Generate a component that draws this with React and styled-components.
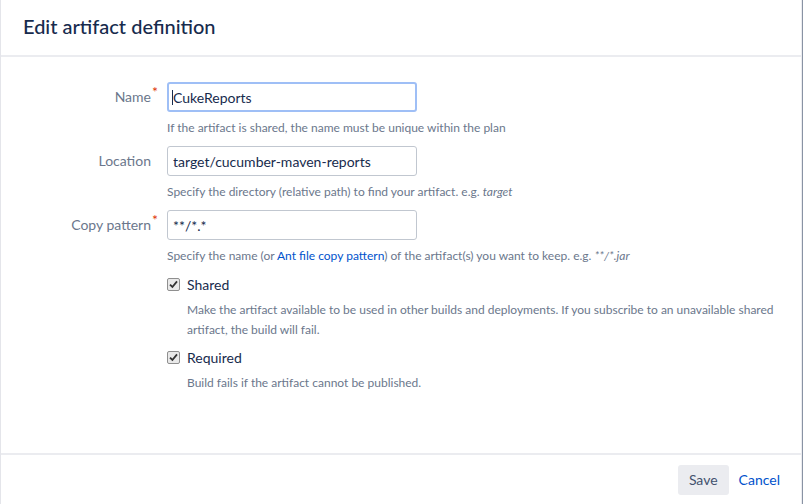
import React from "react";
import styled, { createGlobalStyle } from "styled-components";

const GlobalStyle = createGlobalStyle`
    html, body {
        margin: 0;
        padding: 0;
        background: #8993a4;
    }
    body {
        font-family: "Lato", "Liberation Sans", sans-serif;
        color: #172b4d;
    }
`;

const Dialog = styled.div`
    display: flex;
    flex-direction: column;
    width: 802px;
    height: 504px;
    background: white;
    border-left: 1px solid #e4e5ea;
    border-right: 1px solid #ebecf0;
    box-sizing: border-box;
`;

const Header = styled.div`
    height: 55px;
    display: flex;
    align-items: center;
    padding: 0 22px;
    border-bottom: 2px solid #ebecf0;
    flex-shrink: 0;
    box-sizing: content-box;
`;

const Title = styled.h2`
    margin: 0;
    font-size: 20px;
    font-weight: 500;
    color: #172b4d;
    padding-bottom: 3px;
`;

const Body = styled.div`
    flex: 1;
    padding: 25px 0 0 0;
    display: flex;
    flex-direction: column;
    gap: 10px;
`;

const FieldRow = styled.div`
    display: grid;
    grid-template-columns: 150px 1fr;
    column-gap: 16px;
`;

const Label = styled.label`
    position: relative;
    justify-self: end;
    align-self: start;
    height: 30px;
    line-height: 30px;
    font-size: 14px;
    color: #6b778c;
`;

const Required = styled.span`
    position: absolute;
    left: 100%;
    top: -5px;
    margin-left: 1px;
    color: #de350b;
    font-size: 14px;
`;

const FieldColumn = styled.div`
    display: flex;
    flex-direction: column;
`;

const InputWrap = styled.div`
    position: relative;
    width: 250px;
`;

const TextInput = styled.input`
    width: 250px;
    height: 30px;
    box-sizing: border-box;
    border: ${(p) => (p.$focused ? "2px solid #9fbff6" : "1px solid #c1c7d0")};
    border-radius: 3px;
    padding: 0 ${(p) => (p.$focused ? "4px" : "5px")};
    font-family: inherit;
    font-size: 14px;
    color: #172b4d;
    background: white;
    outline: none;
`;

const Caret = styled.span`
    position: absolute;
    left: 5px;
    top: 8px;
    width: 1px;
    height: 15px;
    background: #172b4d;
`;

const Help = styled.div`
    margin-top: 8px;
    font-size: 12px;
    line-height: 16px;
    color: #6b778c;
    i {
        font-style: italic;
    }
    a {
        color: #0052cc;
        text-decoration: none;
    }
`;

const CheckGroup = styled.div`
    display: flex;
    flex-direction: column;
    padding-left: 166px;
    margin-top: ${(p) => p.$top || 0}px;
`;

const CheckRow = styled.div`
    display: flex;
    align-items: center;
    gap: 7px;
    height: 20px;
    font-size: 14px;
    color: #172b4d;
`;

const Box = styled.span`
    width: 11px;
    height: 11px;
    border: 1px solid #8f8f8f;
    border-radius: 2px;
    background: #e9e9e9;
    display: flex;
    align-items: center;
    justify-content: center;
`;

const CheckDesc = styled.div`
    margin-top: 6px;
    padding-left: 20px;
    padding-right: 4px;
    font-size: 12px;
    line-height: 20px;
    color: #6b778c;
`;

const Footer = styled.div`
    height: 49px;
    border-top: 2px solid #ebecf0;
    display: flex;
    align-items: center;
    justify-content: flex-end;
    gap: 10px;
    padding-right: 21px;
    flex-shrink: 0;
`;

const Button = styled.button`
    height: 30px;
    padding: 0 11px;
    border: none;
    border-radius: 3px;
    background: #ebecf0;
    color: #42526e;
    font-family: inherit;
    font-size: 14px;
`;

const LinkButton = styled.a`
    color: #0052cc;
    font-size: 14px;
    text-decoration: none;
`;

const Check = () => (
    <Box>
        <svg width="9" height="9" viewBox="0 0 9 9">
            <path d="M1 4.6 L3.4 7 L8 1.4" fill="none" stroke="#333" strokeWidth="1.8" />
        </svg>
    </Box>
);

const Field = ({ label, required, value, focused, children }) => (
    <FieldRow>
        <Label>
            {label}
            {required && <Required>*</Required>}
        </Label>
        <FieldColumn>
            <InputWrap>
                <TextInput readOnly value={value} $focused={focused} />
                {focused && <Caret />}
            </InputWrap>
            <Help>{children}</Help>
        </FieldColumn>
    </FieldRow>
);

export default function App() {
    return (
        <>
            <GlobalStyle />
            <Dialog>
                <Header>
                    <Title>Edit artifact definition</Title>
                </Header>
                <Body>
                    <Field label="Name" required value="CukeReports" focused>
                        If the artifact is shared, the name must be unique within the plan
                    </Field>
                    <Field label="Location" value="target/cucumber-maven-reports">
                        Specify the directory (relative path) to find your artifact. e.g. <i>target</i>
                    </Field>
                    <Field label="Copy pattern" required value="**/*.*">
                        Specify the name (or <a href="#">Ant file copy pattern</a>) of the artifact(s) you want to keep. e.g. <i>**/*.jar</i>
                    </Field>
                    <CheckGroup $top={0}>
                        <CheckRow>
                            <Check />
                            Shared
                        </CheckRow>
                        <CheckDesc>
                            Make the artifact available to be used in other builds and deployments. If you subscribe to an unavailable shared artifact, the build will fail.
                        </CheckDesc>
                    </CheckGroup>
                    <CheckGroup $top={-3}>
                        <CheckRow>
                            <Check />
                            Required
                        </CheckRow>
                        <CheckDesc>Build fails if the artifact cannot be published.</CheckDesc>
                    </CheckGroup>
                </Body>
                <Footer>
                    <Button>Save</Button>
                    <LinkButton href="#">Cancel</LinkButton>
                </Footer>
            </Dialog>
        </>
    );
}
